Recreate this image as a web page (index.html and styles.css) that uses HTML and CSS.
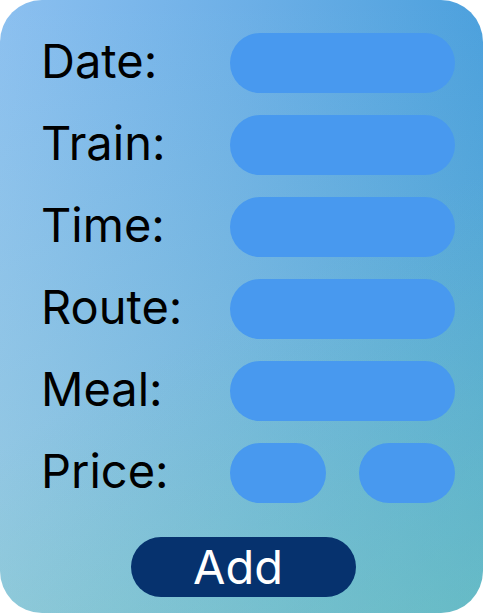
FILE: index.html
```html
<!DOCTYPE html>
<html>
<head>
<meta charset="utf-8">
<link rel="stylesheet" href="styles.css">
</head>
<body>
<div class="card">
  <div class="form">
    <div class="label">Date:</div><div class="field"></div>
    <div class="label">Train:</div><div class="field"></div>
    <div class="label">Time:</div><div class="field"></div>
    <div class="label">Route:</div><div class="field"></div>
    <div class="label">Meal:</div><div class="field"></div>
    <div class="label">Price:</div>
    <div class="pair"><div class="field small"></div><div class="field small"></div></div>
  </div>
  <div class="actions"><button class="add">Add</button></div>
</div>
</body>
</html>
```
FILE: styles.css
```css
html, body {
  margin: 0;
  padding: 0;
  background: #ffffff;
}
.card {
  width: 483px;
  height: 613px;
  box-sizing: border-box;
  border-radius: 42px;
  padding: 33px 0 0 41px;
  background:
    linear-gradient(150deg, rgba(100, 200, 175, 0) 50%, rgba(100, 200, 175, 0.35) 100%),
    linear-gradient(to bottom, rgba(200, 240, 195, 0) 0%, rgba(200, 240, 195, 0.3) 100%),
    linear-gradient(100deg, #8cc0f0 0%, #6aaee6 45%, #3e9ad9 100%);
  font-family: Inter, "Noto Sans", sans-serif;
}
.form {
  display: grid;
  grid-template-columns: 189px 225px;
  grid-auto-rows: 60px;
  row-gap: 22px;
  align-items: center;
}
.label {
  font-size: 47px;
  color: #000;
  line-height: 60px;
  margin-top: -4px;
}
.field {
  height: 60px;
  border-radius: 30px;
  background: #4899ef;
}
.pair {
  display: flex;
  justify-content: space-between;
}
.field.small {
  width: 96px;
}
.actions {
  padding-top: 34px;
  padding-left: 90px;
}
.add {
  width: 225px;
  height: 60px;
  border: none;
  border-radius: 30px;
  background: #06326e;
  color: #ffffff;
  font-family: Inter, "Noto Sans", sans-serif;
  font-size: 47px;
  line-height: 60px;
  padding: 0 11px 0 0;
}
```
